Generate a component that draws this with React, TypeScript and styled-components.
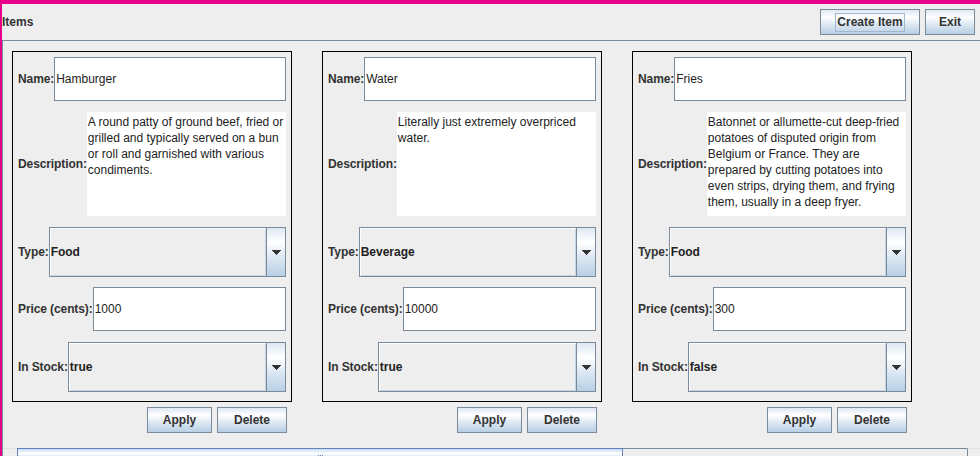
import styled, { createGlobalStyle } from "styled-components";

const GlobalStyle = createGlobalStyle`
  html, body {
    margin: 0;
    padding: 0;
    background: #eeeeee;
    overflow: hidden;
  }
  body {
    font-family: "Liberation Sans", Arial, sans-serif;
    font-size: 12px;
    color: #333333;
  }
`;

const items = [
  {
    name: "Hamburger",
    desc: [
      "A round patty of ground beef, fried or",
      "grilled and typically served on a bun",
      "or roll and garnished with various",
      "condiments.",
    ],
    type: "Food",
    price: "1000",
    stock: "true",
  },
  {
    name: "Water",
    desc: ["Literally just extremely overpriced", "water."],
    type: "Beverage",
    price: "10000",
    stock: "true",
  },
  {
    name: "Fries",
    desc: [
      "Batonnet or allumette-cut deep-fried",
      "potatoes of disputed origin from",
      "Belgium or France. They are",
      "prepared by cutting potatoes into",
      "even strips, drying them, and frying",
      "them, usually in a deep fryer.",
    ],
    type: "Food",
    price: "300",
    stock: "false",
  },
];

const metalGradient =
  "linear-gradient(to bottom, #dde8f3 0%, #ffffff 30%, #dde8f3 60%, #b8cfe5 100%)";

const DownArrow = () => (
  <svg width="9" height="5" viewBox="0 0 9 5" shapeRendering="crispEdges">
    <rect x="0" y="0" width="9" height="1" fill="#333" />
    <rect x="1" y="1" width="7" height="1" fill="#333" />
    <rect x="2" y="2" width="5" height="1" fill="#333" />
    <rect x="3" y="3" width="3" height="1" fill="#333" />
    <rect x="4" y="4" width="1" height="1" fill="#333" />
  </svg>
);

const App = () => {
  return (
    <>
      <GlobalStyle />
      <Frame>
        <Header>
          <Title>Items</Title>
          <HeaderButtons>
            <Button w={100}>
              <FocusRing>Create Item</FocusRing>
            </Button>
            <Button w={50}>Exit</Button>
          </HeaderButtons>
        </Header>
        <ScrollPane>
          <Viewport>
            {items.map((it) => (
              <Column key={it.name}>
                <Card>
                  <Row h={44}>
                    <Label>Name:</Label>
                    <TextField>{it.name}</TextField>
                  </Row>
                  <Row h={104} gap={11}>
                    <Label>Description:</Label>
                    <TextArea>
                      {it.desc.map((l) => (
                        <Line key={l}>{l}</Line>
                      ))}
                    </TextArea>
                  </Row>
                  <Row h={50} gap={11}>
                    <Label>Type:</Label>
                    <Combo>
                      <ComboValue>{it.type}</ComboValue>
                      <ComboArrow>
                        <DownArrow />
                      </ComboArrow>
                    </Combo>
                  </Row>
                  <Row h={44} gap={10}>
                    <Label>Price (cents):</Label>
                    <TextField>{it.price}</TextField>
                  </Row>
                  <Row h={50} gap={11}>
                    <Label>In Stock:</Label>
                    <Combo>
                      <ComboValue>{it.stock}</ComboValue>
                      <ComboArrow>
                        <DownArrow />
                      </ComboArrow>
                    </Combo>
                  </Row>
                </Card>
                <Actions>
                  <Button w={65}>Apply</Button>
                  <Button w={70}>Delete</Button>
                </Actions>
              </Column>
            ))}
          </Viewport>
          <ScrollBar>
            <ScrollButton w={14}>
              <svg width="5" height="9" viewBox="0 0 5 9">
                <polygon points="5,0 5,9 0,4.5" fill="#333" />
              </svg>
            </ScrollButton>
            <Thumb>
              <Grip>
                <i />
                <i />
                <i />
              </Grip>
            </Thumb>
            <Track />
            <ScrollButton w={17} right>
              <svg width="5" height="9" viewBox="0 0 5 9">
                <polygon points="0,0 0,9 5,4.5" fill="#333" />
              </svg>
            </ScrollButton>
          </ScrollBar>
        </ScrollPane>
      </Frame>
    </>
  );
};
export default App;

const Frame = styled.div`
  width: 980px;
  height: 456px;
  box-sizing: border-box;
  border-top: 4px solid #e6008a;
  border-left: 2px solid #e6008a;
  background: #eeeeee;
  display: flex;
  flex-direction: column;
  overflow: hidden;
`;

const Header = styled.div`
  height: 36px;
  flex-shrink: 0;
  display: flex;
  align-items: center;
  justify-content: space-between;
  padding-right: 5px;
`;

const Title = styled.div`
  font-weight: 700;
  font-size: 12px;
  color: #333333;
`;

const HeaderButtons = styled.div`
  display: flex;
  gap: 5px;
`;

const Button = styled.div<{ w: number }>`
  width: ${(p) => p.w}px;
  height: 26px;
  box-sizing: border-box;
  border: 1px solid #7a8a99;
  background: ${metalGradient};
  display: flex;
  align-items: center;
  justify-content: center;
  font-weight: 700;
  font-size: 12px;
  color: #333333;
  flex-shrink: 0;
`;

const FocusRing = styled.span`
  border: 1px solid #a3b8cc;
  padding: 1px 1px 2px 1px;
  line-height: 14px;
`;

const ScrollPane = styled.div`
  flex: 1;
  border-top: 1px solid #7a8a99;
  border-left: 1px solid #7a8a99;
  display: flex;
  flex-direction: column;
  min-height: 0;
`;

const Viewport = styled.div`
  height: 407px;
  flex-shrink: 0;
  box-sizing: border-box;
  padding: 10px 0 0 9px;
  display: flex;
  gap: 30px;
`;

const Column = styled.div`
  width: 280px;
  display: flex;
  flex-direction: column;
`;

const Card = styled.div`
  box-sizing: border-box;
  border: 1px solid #000000;
  padding: 5px 5px 9px 5px;
  display: flex;
  flex-direction: column;
`;

const Row = styled.div<{ h: number; gap?: number }>`
  height: ${(p) => p.h}px;
  margin-top: ${(p) => p.gap ?? 0}px;
  display: flex;
  align-items: center;
`;

const Label = styled.div`
  font-weight: 700;
  font-size: 12px;
  letter-spacing: -0.1px;
  color: #333333;
  white-space: nowrap;
`;

const TextField = styled.div`
  flex: 1;
  height: 100%;
  box-sizing: border-box;
  border: 1px solid #7a8a99;
  background: #ffffff;
  display: flex;
  align-items: center;
  padding-left: 1px;
  font-size: 12px;
  color: #222222;
`;

const TextArea = styled.div`
  flex: 1;
  height: 100%;
  box-sizing: border-box;
  background: #ffffff;
  padding: 2px 1px 0 1px;
  font-size: 12px;
  line-height: 16px;
  color: #222222;
`;

const Line = styled.div`
  white-space: nowrap;
`;

const Combo = styled.div`
  flex: 1;
  height: 100%;
  display: flex;
`;

const ComboValue = styled.div`
  flex: 1;
  box-sizing: border-box;
  border: 1px solid #7a8a99;
  border-right: none;
  box-shadow: inset 1px 1px 0 #ffffff, inset -1px -1px 0 #c6d5e4;
  background: #eeeeee;
  display: flex;
  align-items: center;
  padding-left: 1px;
  font-weight: 700;
  font-size: 12px;
  color: #222222;
`;

const ComboArrow = styled.div`
  width: 20px;
  box-sizing: border-box;
  border: 1px solid #7a8a99;
  background: ${metalGradient};
  display: flex;
  align-items: center;
  justify-content: center;
  padding-left: 1px;
`;

const Actions = styled.div`
  margin-top: 5px;
  display: flex;
  justify-content: flex-end;
  gap: 5px;
  padding-right: 5px;
`;

const ScrollBar = styled.div`
  height: 17px;
  flex-shrink: 0;
  display: flex;
  width: 1000px;
`;

const ScrollButton = styled.div<{ w: number; right?: boolean }>`
  width: ${(p) => p.w}px;
  flex-shrink: 0;
  box-sizing: border-box;
  border-top: 1px solid #dde1e6;
  border-left: ${(p) => (p.right ? "1px solid #7a8a99" : "none")};
  background: #eeeeee;
  display: flex;
  align-items: center;
  justify-content: center;
  padding-top: 6px;
`;

const Thumb = styled.div`
  width: 606px;
  flex-shrink: 0;
  box-sizing: border-box;
  border: 1px solid #6382bf;
  background: linear-gradient(
    to bottom,
    #c8ddf2 0%,
    #ffffff 30%,
    #c8ddf2 60%,
    #a6c0e0 100%
  );
  display: flex;
  align-items: center;
  justify-content: center;
`;

const Grip = styled.div`
  display: flex;
  gap: 1px;
  i {
    display: block;
    width: 1px;
    height: 7px;
    margin-top: 4px;
    background: #6382bf;
  }
`;

const Track = styled.div`
  width: 344px;
  flex-shrink: 0;
  border-top: 1px solid #7a8a99;
  background: #eeeeee;
`;
